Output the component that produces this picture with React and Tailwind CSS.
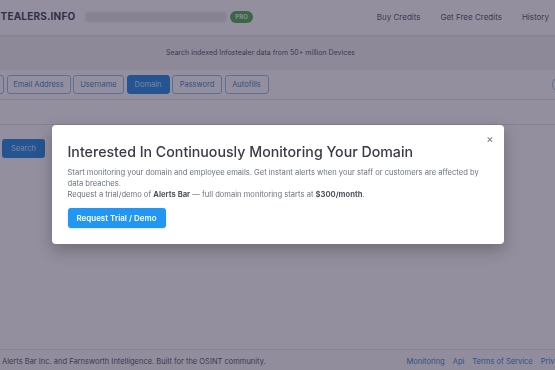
import React from 'react';

const tabs = [
    { label: 'Email Address', w: 'w-[64px]' },
    { label: 'Username', w: 'w-[51px]' },
    { label: 'Domain', w: 'w-[43px]', active: true },
    { label: 'Password', w: 'w-[50px]' },
    { label: 'Autofills', w: 'w-[44px]' },
];

export default function App() {
    return (
        <div className="relative h-[370px] w-full overflow-hidden bg-white font-['Inter','Liberation_Sans',sans-serif]">
            {/* Page underneath */}
            <div className="flex h-full flex-col">
                {/* Nav */}
                <div className="flex h-[37px] shrink-0 items-center justify-between border-b-2 border-[#e4e4ea] bg-white pb-[2px]">
                    <div className="flex items-center">
                        <span className="ml-[-31px] text-[10px] font-bold tracking-[0.2px] text-[#374151]">INFOSTEALERS.INFO</span>
                        <div className="ml-[10px] h-[10px] w-[142px] rounded-sm bg-[#e3e3e8] blur-[1px]" />
                        <span className="ml-[3px] flex h-[12px] items-center rounded-full bg-[#4caf50] px-[5px] text-[6px] font-bold text-[#e8f5e9]">PRO</span>
                    </div>
                    <div className="flex items-center gap-[20px] pr-[6px] text-[8px] text-[#4b5563]">
                        <span>Buy Credits</span>
                        <span>Get Free Credits</span>
                        <span>History</span>
                    </div>
                </div>

                {/* Banner */}
                <div className="flex h-[33px] shrink-0 items-center justify-center bg-[#f2f2f5] pr-[34px] text-[7px] text-[#4b5563]">
                    Search indexed Infostealer data from 50+ million Devices
                </div>

                {/* Tabs */}
                <div className="flex h-[30px] shrink-0 items-center justify-between border-b border-[#e2e2e8]">
                    <div className="flex items-center gap-[2.5px]">
                        <button className="ml-[-40px] h-[19px] w-[44px] rounded-[3px] border border-[#8cc0ea] text-[7.5px] text-[#2f86d0]">IP</button>
                        {tabs.map((t) => (
                            <button
                                key={t.label}
                                className={
                                    t.active
                                        ? `h-[19px] ${t.w} rounded-[3px] border border-[#1e88e5] bg-[#1e88e5] text-[7.5px] text-[#cfe6fb]`
                                        : `h-[19px] ${t.w} rounded-[3px] border border-[#8cc0ea] text-[7.5px] text-[#2f86d0]`
                                }
                            >
                                {t.label}
                            </button>
                        ))}
                    </div>
                    <div className="mr-[-14px] h-[17px] w-[17px] rounded-full border border-[#8cc0ea]" />
                </div>

                {/* Input row */}
                <div className="h-[25px] shrink-0 border-b border-[#e2e2e8]" />

                {/* Search row */}
                <div className="flex shrink-0 pl-[2px] pt-[14px]">
                    <button className="h-[19px] w-[43px] rounded-[3px] bg-[#1e88e5] text-[7.5px] text-[#cfe6fb]">Search</button>
                </div>

                <div className="flex-1" />

                {/* Footer */}
                <div className="flex h-[21px] shrink-0 items-center justify-between border-t border-[#e6e6ec] bg-[#fafafc] pl-[2px] pt-[4px] text-[7.5px]">
                    <span className="text-[#4b5563]">Alerts Bar Inc. and Farnsworth Intelligence. Built for the OSINT community.</span>
                    <div className="mr-[-12px] flex items-center gap-[8px] text-[#2f86d0]">
                        <span>Monitoring</span>
                        <span>Api</span>
                        <span>Terms of Service</span>
                        <span>Privacy</span>
                    </div>
                </div>
            </div>

            {/* Backdrop */}
            <div className="absolute inset-0 bg-[#2a1f3d]/50 backdrop-blur-[0.6px]" />

            {/* Modal */}
            <div className="absolute inset-x-0 top-[125px] flex justify-center">
                <div className="relative w-[452px] rounded-[4px] bg-white px-[16px] pb-[16px] pt-[16px] shadow-[0_6px_16px_rgba(0,0,0,0.25)]">
                    <button className="absolute right-[10px] top-[9px] text-[11px] leading-none text-[#6b7280]">×</button>
                    <h2 className="text-[14.2px] font-medium leading-[22px] text-[#3a3a48]">
                        Interested In Continuously Monitoring Your Domain
                    </h2>
                    <div className="mt-[4px] text-[7.6px] leading-[11px] text-[#6b7280]">
                        <p>Start monitoring your domain and employee emails. Get instant alerts when your staff or customers are affected by data breaches.</p>
                        <p>
                            Request a trial/demo of <span className="font-bold text-[#4b5563]">Alerts Bar</span> — full domain monitoring starts at{' '}
                            <span className="font-bold text-[#4b5563]">$300/month</span>.
                        </p>
                    </div>
                    <button className="mt-[8px] h-[20px] w-[98px] rounded-[3px] bg-[#2196f3] text-[8px] font-semibold text-white shadow-sm">
                        Request Trial / Demo
                    </button>
                </div>
            </div>
        </div>
    );
}
